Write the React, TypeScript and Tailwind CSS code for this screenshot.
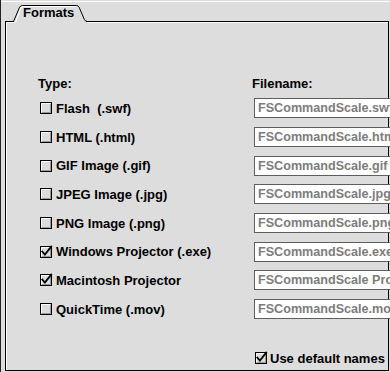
import React from "react";

function CheckBox({ checked }: { checked?: boolean }) {
  return (
    <svg width="12" height="12" viewBox="0 0 12 12" className="shrink-0 overflow-visible">
      <rect x="0.5" y="0.5" width="11" height="11" fill="#dcdcdc" stroke="#000" />
      <path d="M1.5 10 V1.5 H10" stroke="#ffffff" fill="none" />
      <path d="M2 10.5 H10.5 V2" stroke="#9a9a9a" fill="none" />
      {checked && (
        <path d="M2.3 5.6 L4.9 8.6 L11.2 0.6" stroke="#000" strokeWidth="1.8" fill="none" strokeLinecap="square" />
      )}
    </svg>
  );
}

const rows: { label: string; file: string; checked?: boolean }[] = [
  { label: "Flash  (.swf)", file: "FSCommandScale.swf" },
  { label: "HTML (.html)", file: "FSCommandScale.html" },
  { label: "GIF Image (.gif)", file: "FSCommandScale.gif" },
  { label: "JPEG Image (.jpg)", file: "FSCommandScale.jpg" },
  { label: "PNG Image (.png)", file: "FSCommandScale.png" },
  { label: "Windows Projector (.exe)", file: "FSCommandScale.exe", checked: true },
  { label: "Macintosh Projector", file: "FSCommandScale Projector", checked: true },
  { label: "QuickTime (.mov)", file: "FSCommandScale.mov" },
];

export default function App() {
  return (
    <div className="w-[390px] h-[372px] bg-[#dddddd] overflow-hidden flex flex-col font-['Liberation_Sans',Arial,sans-serif] font-bold text-black text-[13px]">
      {/* tab strip */}
      <div className="relative h-[23px] shrink-0 pl-[23px] pt-[5px]">
        <svg width="390" height="23" className="absolute left-0 top-0" shapeRendering="crispEdges">
          <line x1="0" y1="1.5" x2="390" y2="1.5" stroke="#ffffff" />
          <line x1="0.5" y1="0" x2="0.5" y2="23" stroke="#222" />
          <line x1="5" y1="21.5" x2="14" y2="21.5" stroke="#000" />
          <line x1="86" y1="21.5" x2="389" y2="21.5" stroke="#000" />
          <line x1="5.5" y1="21" x2="5.5" y2="23" stroke="#000" />
          <line x1="388.5" y1="21" x2="388.5" y2="23" stroke="#000" />
          <line x1="6" y1="22.5" x2="14" y2="22.5" stroke="#fff" />
          <line x1="87" y1="22.5" x2="388" y2="22.5" stroke="#fff" />
          <line x1="6.5" y1="22" x2="6.5" y2="23" stroke="#fff" />
        </svg>
        <svg width="390" height="23" className="absolute left-0 top-0">
          <path d="M13.5 21.5 L19.6 7.2 Q20.5 5.5 22.5 5.5 L76.5 5.5 Q78.3 5.5 79.1 7.2 L84.4 19.6 Q85.4 21.5 87.5 21.5" stroke="#000" fill="none" />
          <path d="M15.3 22.6 L20.6 8.8 Q21.5 6.6 23.2 6.6 L76.2 6.6" stroke="#fff" fill="none" />
        </svg>
        <span className="relative block leading-[15px]">Formats</span>
      </div>
      {/* panel body */}
      <div className="flex-1 flex border-l border-[#222] pl-[4px] pb-[1px]">
        <div className="w-[384px] shrink-0 h-full border-l border-r border-b border-black">
          <div className="h-full border-l border-white pl-[31px] pt-[53px]">
            <div className="flex h-[15px] leading-[15px]">
              <div className="w-[214px] shrink-0">Type:</div>
              <div className="whitespace-nowrap">Filename:</div>
            </div>
            <div className="mt-[3px]">
              {rows.map((r) => (
                <div key={r.label} className="flex h-[28.7px] items-center">
                  <div className="w-[214px] shrink-0 flex items-center pl-[2px] gap-[4px]">
                    <CheckBox checked={r.checked} />
                    <span className="whitespace-pre leading-[15px]">{r.label}</span>
                  </div>
                  <div className="ml-[2px] w-[170px] h-[20px] shrink-0 bg-white border border-[#5e5e5e] pl-[3px] text-[12.6px] leading-[18px] text-[#7c7c7c] whitespace-nowrap overflow-hidden">
                    {r.file}
                  </div>
                </div>
              ))}
            </div>
            <div className="mt-[27px] h-[15px] flex items-center pl-[217px] gap-[3px]">
              <CheckBox checked />
              <span className="whitespace-nowrap leading-[15px]">Use default names</span>
            </div>
          </div>
        </div>
      </div>
    </div>
  );
}
